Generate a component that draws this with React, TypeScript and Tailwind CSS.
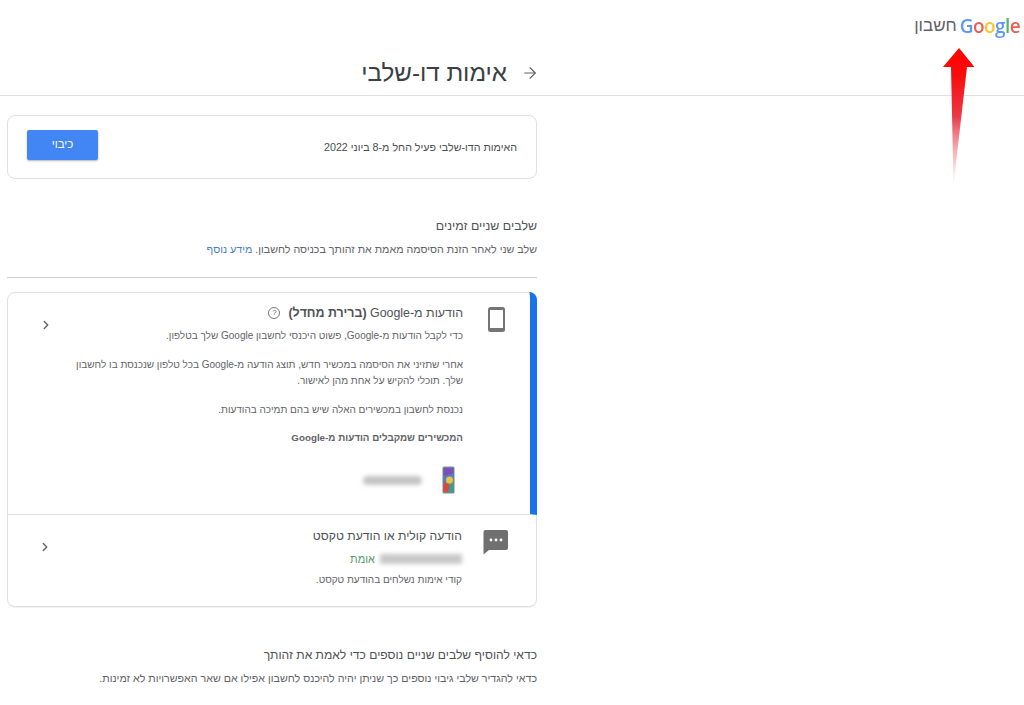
import React from 'react';
import { ArrowRight, ChevronRight } from 'lucide-react';

const GoogleWord = () => (
  <span dir="ltr" className="font-['Open_Sans',sans-serif] text-[19px] font-semibold leading-6 tracking-[-0.6px] opacity-85">
    <span className="text-[#4285f4]">G</span>
    <span className="text-[#ea4335]">o</span>
    <span className="text-[#fbbc05]">o</span>
    <span className="text-[#4285f4]">g</span>
    <span className="text-[#34a853]">l</span>
    <span className="text-[#ea4335]">e</span>
  </span>
);

const RedArrow = () => (
  <svg className="absolute left-[942px] top-[47px]" width="34" height="140" viewBox="0 0 34 140">
    <defs>
      <linearGradient id="fade" x1="0" y1="0" x2="0" y2="1">
        <stop offset="0" stopColor="#ff0000" />
        <stop offset="0.2" stopColor="#f80d0d" />
        <stop offset="0.5" stopColor="#e83a48" />
        <stop offset="1" stopColor="#f3a0a8" stopOpacity="0.1" />
      </linearGradient>
    </defs>
    <path d="M17 1 L32.5 20 L25 20 L11.5 138 L9 20 L1 20 Z" fill="url(#fade)" />
  </svg>
);

const PhoneIcon = () => (
  <svg width="19" height="27" viewBox="0 0 19 27">
    <rect x="1" y="1" width="17" height="25" rx="2.5" fill="#757575" />
    <rect x="3" y="4" width="13" height="18" fill="#ffffff" />
  </svg>
);

const SmsIcon = () => (
  <svg width="26" height="26" viewBox="0 0 26 26">
    <path d="M2.5 1 H23 a2 2 0 0 1 2 2 V19 a2 2 0 0 1 -2 2 H6 L0.5 25.5 V3 a2 2 0 0 1 2 -2 Z" fill="#707070" />
    <circle cx="8" cy="11" r="1.4" fill="#fff" />
    <circle cx="13" cy="11" r="1.4" fill="#fff" />
    <circle cx="18" cy="11" r="1.4" fill="#fff" />
  </svg>
);

const DeviceThumb = () => (
  <svg width="13" height="28" viewBox="0 0 13 28">
    <rect x="0.5" y="0.5" width="12" height="27" rx="1.5" fill="#6f8f8c" />
    <rect x="1.5" y="2" width="10" height="8" fill="#7b4fb5" />
    <path d="M1.5 10 L11.5 7 V14 L1.5 17 Z" fill="#5a78c8" />
    <circle cx="7.5" cy="14" r="3.5" fill="#e8c53a" />
    <path d="M1.5 16 L8 19 L6 26 H1.5 Z" fill="#d8483f" />
    <path d="M8 19 L11.5 17 V26 H6 Z" fill="#3f9a8f" />
  </svg>
);

const App: React.FC = () => {
  return (
    <div dir="rtl" className="relative h-[705px] w-[1024px] overflow-hidden bg-white font-['Liberation_Sans',sans-serif] text-[#5f6368]">
      {/* Header */}
      <header className="h-[96px] border-b border-[#e0e0e0]">
        <div className="flex items-center gap-[3px] pr-1 pt-[14px]">
          <GoogleWord />
          <span className="text-[17px] leading-6 text-[#5f6368]">חשבון</span>
        </div>
        <div className="mr-[487px] mt-[19px] flex items-center gap-[14px]">
          <ArrowRight size={18} strokeWidth={1.5} className="-mr-[2px] text-[#5f6368]" />
          <h1 className="text-[24.2px] font-light leading-8 text-[#3c4043]">אימות דו-שלבי</h1>
        </div>
      </header>

      <main className="mr-[487px] w-[530px]">
        {/* Status */}
        <section className="mt-[19px] flex h-[64px] items-center justify-between rounded-lg border border-[#e0e0e0] px-[19px]">
          <p className="text-[10.7px] text-[#4a4d50]">האימות הדו-שלבי פעיל החל מ-8 ביוני 2022</p>
          <button className="-mt-[5px] h-[30px] w-[71px] rounded-[2px] bg-[#4285f4] text-[11.5px] text-white shadow-[0_1px_2px_rgba(0,0,0,0.3)]">כיבוי</button>
        </section>

        {/* Available */}
        <section className="mt-[37px] border-b border-[#cfcfcf] pb-[20px]">
          <h2 className="text-[12.4px] leading-5 text-[#4f5256]">שלבים שניים זמינים</h2>
          <p className="mt-[5px] text-[10.7px] leading-4">
            שלב שני לאחר הזנת הסיסמה מאמת את זהותך בכניסה לחשבון. <span className="text-[#4a7fc1]">מידע נוסף</span>
          </p>
        </section>

        <section className="mt-[14px] h-[315px] rounded-lg border border-[#e0e0e0] shadow-[0_1px_1px_rgba(0,0,0,0.06)]">
          {/* Prompt */}
          <div className="-mr-px -mt-px flex h-[223px] rounded-tr-lg border-b border-r-[7px] border-b-[#e0e0e0] border-r-[#1a73e8]">
            <div className="flex w-[67px] shrink-0 justify-center pt-[14px]">
              <PhoneIcon />
            </div>
            <div className="w-[394px] pt-[11px]">
              <div className="flex items-center gap-[8px]">
                <h3 className="text-[12.4px] leading-5 text-[#4f5256]">הודעות מ-Google <b>(ברירת מחדל)</b></h3>
                <span className="flex h-[12px] w-[12px] items-center justify-center rounded-full border border-[#777] text-[8px] leading-none">?</span>
              </div>
              <p className="mt-[5px] text-[10px] leading-4">כדי לקבל הודעות מ-Google, פשוט היכנסי לחשבון Google שלך בטלפון.</p>
              <p className="mt-[13px] text-[10px] leading-4">אחרי שתזיני את הסיסמה במכשיר חדש, תוצג הודעה מ-Google בכל טלפון שנכנסת בו לחשבון שלך. תוכלי להקיש על אחת מהן לאישור.</p>
              <p className="mt-[13px] text-[10px] leading-4">נכנסת לחשבון במכשירים האלה שיש בהם תמיכה בהודעות.</p>
              <p className="mt-[12px] text-[9.8px] font-bold leading-4">המכשירים שמקבלים הודעות מ-Google</p>
              <div className="mt-[20px] flex items-center gap-[20px] pr-[8px]">
                <DeviceThumb />
                <div className="h-[9px] w-[59px] rounded-full bg-[#c4c4c4] blur-[2px]" />
              </div>
            </div>
            <div className="flex flex-1 justify-start pr-[16px] pt-[26px]">
              <ChevronRight size={14} strokeWidth={2.4} className="text-[#5f6368]" />
            </div>
          </div>

          {/* SMS */}
          <div className="flex h-[91px]">
            <div className="flex w-[74px] shrink-0 justify-center pr-[7px] pt-[14px]">
              <SmsIcon />
            </div>
            <div className="w-[394px] pt-[11px]">
              <h3 className="text-[12.2px] leading-5 text-[#4f5256]">הודעה קולית או הודעת טקסט</h3>
              <div className="mt-[5px] flex items-center gap-[5px]">
                <div className="h-[10px] w-[82px] bg-[#c8c8c8] blur-[2px]" />
                <span className="text-[11px] leading-4 text-[#5b9a68]">אומת</span>
              </div>
              <p className="mt-[5px] text-[10px] leading-4">קודי אימות נשלחים בהודעת טקסט.</p>
            </div>
            <div className="flex flex-1 justify-start pr-[16px] pt-[25px]">
              <ChevronRight size={14} strokeWidth={2.4} className="text-[#5f6368]" />
            </div>
          </div>
        </section>

        {/* Backup */}
        <section className="mt-[38px]">
          <h2 className="text-[12.1px] leading-5 text-[#4f5256]">כדאי להוסיף שלבים שניים נוספים כדי לאמת את זהותך</h2>
          <p className="mt-[5px] text-[10.7px] leading-4">כדאי להגדיר שלבי גיבוי נוספים כך שניתן יהיה להיכנס לחשבון אפילו אם שאר האפשרויות לא זמינות.</p>
        </section>
      </main>

      <RedArrow />
    </div>
  );
};

export default App;
